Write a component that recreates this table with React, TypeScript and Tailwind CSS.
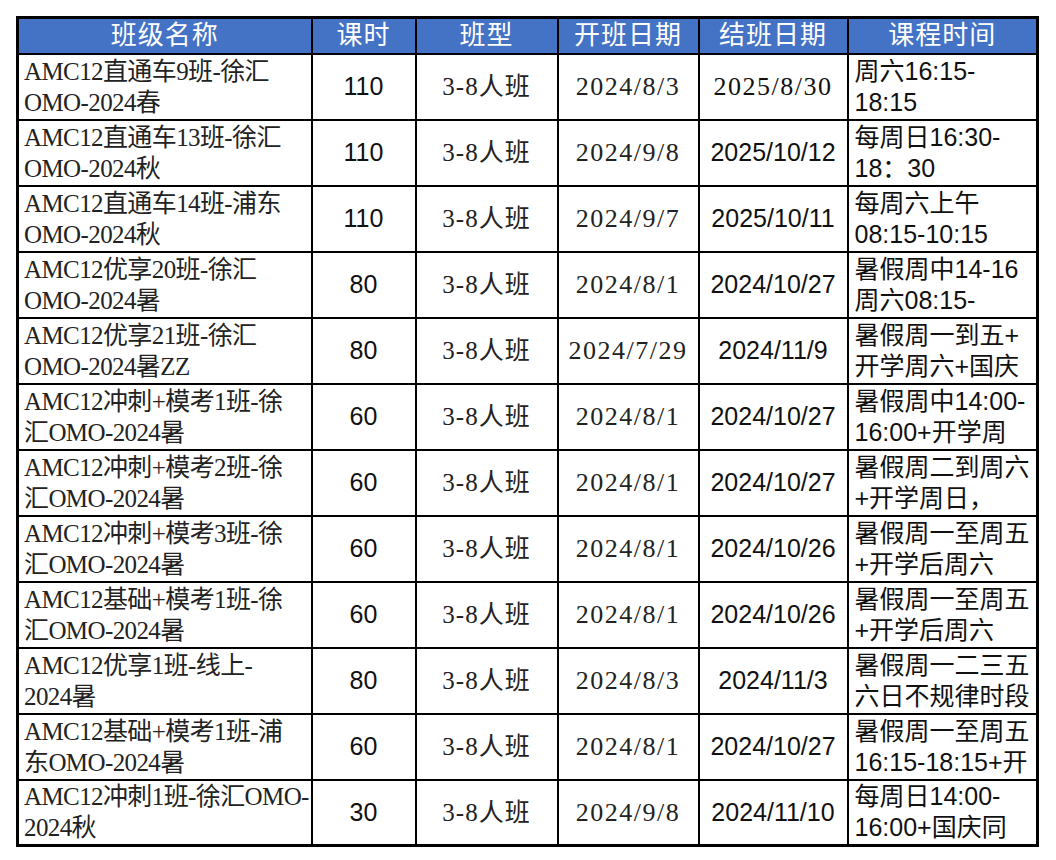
import React from 'react';

type Row = {
  name: [string, string];
  hours: string;
  start: string;
  end: string;
  endSerif?: boolean;
  time: [string, string];
};

const rows: Row[] = [
  { name: ['AMC12直通车9班-徐汇', 'OMO-2024春'], hours: '110', start: '2024/8/3', end: '2025/8/30', endSerif: true, time: ['周六16:15-', '18:15'] },
  { name: ['AMC12直通车13班-徐汇', 'OMO-2024秋'], hours: '110', start: '2024/9/8', end: '2025/10/12', time: ['每周日16:30-', '18：30'] },
  { name: ['AMC12直通车14班-浦东', 'OMO-2024秋'], hours: '110', start: '2024/9/7', end: '2025/10/11', time: ['每周六上午', '08:15-10:15'] },
  { name: ['AMC12优享20班-徐汇', 'OMO-2024暑'], hours: '80', start: '2024/8/1', end: '2024/10/27', time: ['暑假周中14-16', '周六08:15-'] },
  { name: ['AMC12优享21班-徐汇', 'OMO-2024暑ZZ'], hours: '80', start: '2024/7/29', end: '2024/11/9', time: ['暑假周一到五+', '开学周六+国庆'] },
  { name: ['AMC12冲刺+模考1班-徐', '汇OMO-2024暑'], hours: '60', start: '2024/8/1', end: '2024/10/27', time: ['暑假周中14:00-', '16:00+开学周'] },
  { name: ['AMC12冲刺+模考2班-徐', '汇OMO-2024暑'], hours: '60', start: '2024/8/1', end: '2024/10/27', time: ['暑假周二到周六', '+开学周日，'] },
  { name: ['AMC12冲刺+模考3班-徐', '汇OMO-2024暑'], hours: '60', start: '2024/8/1', end: '2024/10/26', time: ['暑假周一至周五', '+开学后周六'] },
  { name: ['AMC12基础+模考1班-徐', '汇OMO-2024暑'], hours: '60', start: '2024/8/1', end: '2024/10/26', time: ['暑假周一至周五', '+开学后周六'] },
  { name: ['AMC12优享1班-线上-', '2024暑'], hours: '80', start: '2024/8/3', end: '2024/11/3', time: ['暑假周一二三五', '六日不规律时段'] },
  { name: ['AMC12基础+模考1班-浦', '东OMO-2024暑'], hours: '60', start: '2024/8/1', end: '2024/10/27', time: ['暑假周一至周五', '16:15-18:15+开'] },
  { name: ['AMC12冲刺1班-徐汇OMO-', '2024秋'], hours: '30', start: '2024/9/8', end: '2024/11/10', time: ['每周日14:00-', '16:00+国庆同'] },
];

const serif = "font-['Liberation_Serif','Noto_Sans_CJK_SC',serif]";
const sans = "font-['Liberation_Sans','Noto_Sans_CJK_SC',sans-serif]";

const headers = ['班级名称', '课时', '班型', '开班日期', '结班日期', '课程时间'];

const App = () => {
  return (
    <div className="w-[1056px] h-[860px] bg-white pt-4 pl-4">
      <table className="table-fixed border-collapse border-[3px] border-black w-[1020px]">
        <colgroup>
          <col className="w-[294px]" />
          <col className="w-[104px]" />
          <col className="w-[142px]" />
          <col className="w-[141px]" />
          <col className="w-[149px]" />
          <col className="w-[190px]" />
        </colgroup>
        <thead>
          <tr className="h-[36px] bg-[#4472c4]">
            {headers.map((h) => (
              <th
                key={h}
                className={`border-2 border-black text-white text-[26px] leading-[32px] font-normal tracking-[1px] ${serif}`}
              >
                {h}
              </th>
            ))}
          </tr>
        </thead>
        <tbody>
          {rows.map((r, i) => (
            <tr key={i} className="h-[66px]">
              {/* 班级名称 */}
              <td className={`border-2 border-black pl-[5px] text-[#222] text-[25px] leading-[31px] tracking-[-0.6px] whitespace-nowrap ${serif}`}>
                <div>{r.name[0]}</div>
                <div>{r.name[1]}</div>
              </td>
              <td className={`border-2 border-black text-center text-[25px] text-[#111] ${sans}`}>
                {r.hours}
              </td>
              <td className={`border-2 border-black text-center text-[25px] text-[#222] tracking-[1px] ${serif}`}>
                3-8人班
              </td>
              <td className={`border-2 border-black text-center text-[26px] text-[#222] tracking-[1.5px] ${serif}`}>
                {r.start}
              </td>
              <td
                className={`border-2 border-black text-center text-[#111] ${
                  r.endSerif ? `text-[26px] tracking-[1.5px] ${serif}` : `text-[25px] ${sans}`
                }`}
              >
                {r.end}
              </td>
              {/* 课程时间 */}
              <td className={`border-2 border-black pl-[6px] text-[25px] leading-[31px] text-[#111] whitespace-nowrap ${sans}`}>
                <div>{r.time[0]}</div>
                <div>{r.time[1]}</div>
              </td>
            </tr>
          ))}
        </tbody>
      </table>
    </div>
  );
};

export default App;
